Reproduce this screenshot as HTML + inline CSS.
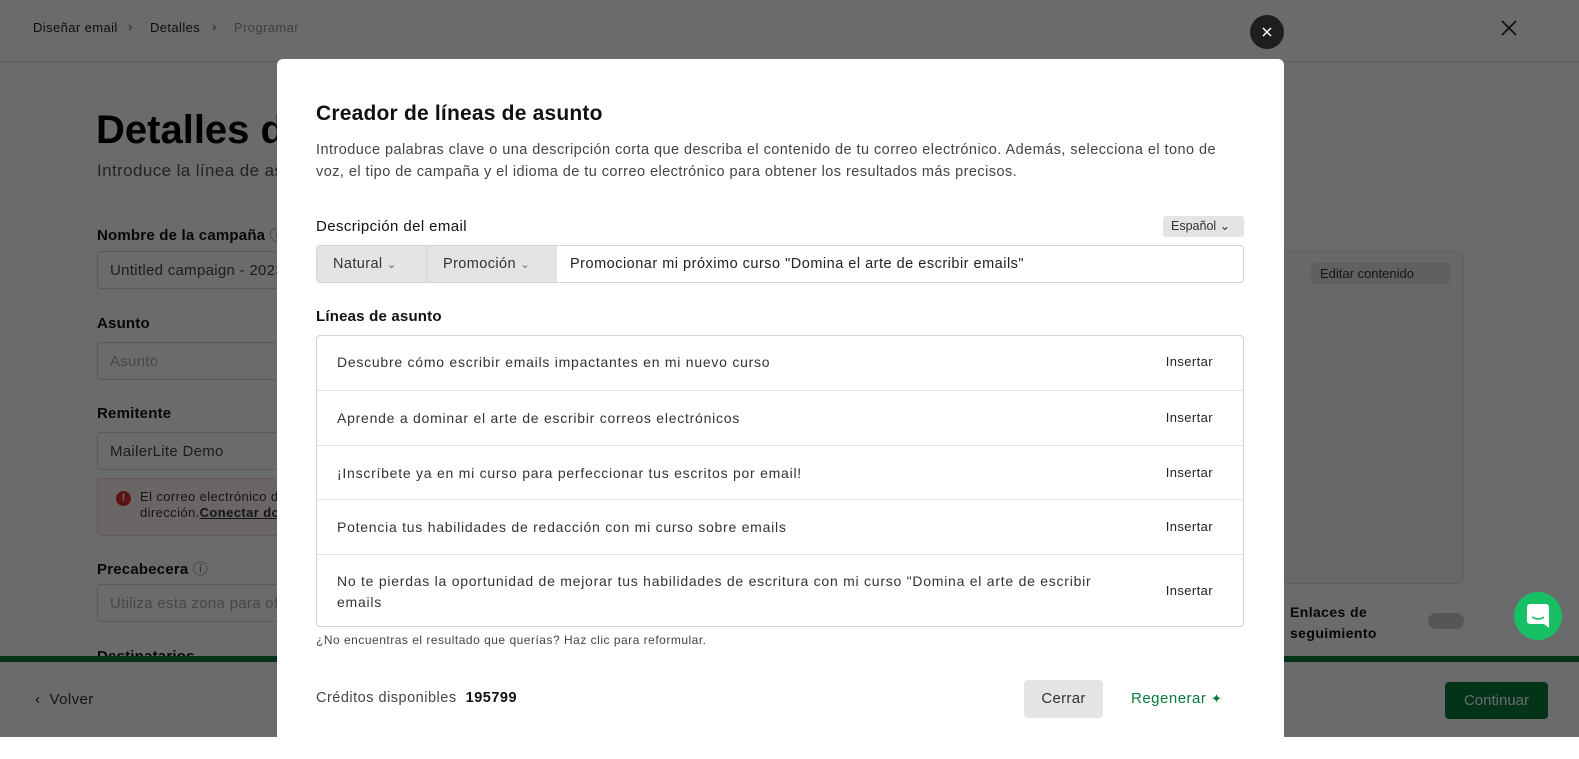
<!DOCTYPE html>
<html><head><meta charset="utf-8"><style>
*{box-sizing:border-box;margin:0;padding:0}
body{width:1579px;height:737px;overflow:hidden;position:relative;font-family:"Liberation Sans",sans-serif;background:#fff;color:#111}
.a{position:absolute}
.t{letter-spacing:.4px}
.inp{position:absolute;border:1px solid #d4d4d8;border-radius:4px;background:#fff;font-size:14px;color:#444;padding-left:12px;display:flex;align-items:center;letter-spacing:.3px}
.lbl{position:absolute;font-size:14px;font-weight:bold;color:#111;letter-spacing:.2px}
#ov{position:absolute;left:0;top:0;width:1579px;height:737px;background:rgba(0,0,0,.58)}
#m{position:absolute;left:277px;top:59px;width:1007px;height:700px;background:#fff;border-radius:6px 6px 0 0}
.row{position:absolute;left:0;width:926px;border-top:1px solid #e4e4e7;font-size:14px;color:#333;letter-spacing:.75px}
.row span{position:absolute;left:20px}
.row b{position:absolute;right:30px;font-weight:normal;font-size:13px;color:#222;letter-spacing:.4px}
</style></head><body>
<div class="a t" style="left:33px;top:20px;font-size:13px;color:#222">Diseñar email</div>
<div class="a" style="left:128px;top:19px;font-size:13px;color:#555">›</div>
<div class="a t" style="left:150px;top:20px;font-size:13px;color:#222">Detalles</div>
<div class="a" style="left:212px;top:19px;font-size:13px;color:#555">›</div>
<div class="a t" style="left:234px;top:20px;font-size:13px;color:#999">Programar</div>
<svg class="a" style="left:1501px;top:20px" width="16" height="16" viewBox="0 0 16 16"><path d="M1 1L15 15M15 1L1 15" stroke="#222" stroke-width="1.6"/></svg>
<div class="a" style="left:0;top:61px;width:1579px;height:1px;background:#ddd"></div>
<div class="a" style="left:96px;top:108px;font-size:40px;font-weight:bold;color:#000">Detalles de la campaña</div>
<div class="a t" style="left:97px;top:161px;font-size:17px;color:#555">Introduce la línea de asunto</div>
<div class="lbl" style="left:97px;top:224px;font-size:15px">Nombre de la campaña <span style="font-weight:normal;color:#777">ⓘ</span></div>
<div class="inp" style="left:97px;top:251px;width:500px;height:38px;font-size:15px">Untitled campaign - 2023</div>
<div class="lbl" style="left:97px;top:315px;font-size:15px">Asunto</div>
<div class="inp" style="left:97px;top:342px;width:500px;height:38px;color:#aaa;font-size:15px">Asunto</div>
<div class="lbl" style="left:97px;top:405px;font-size:15px">Remitente</div>
<div class="inp" style="left:97px;top:432px;width:500px;height:38px;font-size:15px">MailerLite Demo</div>
<div class="a" style="left:97px;top:478px;width:500px;height:58px;background:#fdf2f2;border:1px solid #f5d0d0;border-radius:4px"></div>
<div class="a" style="left:116px;top:491px;width:15px;height:15px;border-radius:50%;background:#d93030;color:#fff;font-size:11px;font-weight:bold;text-align:center;line-height:15px">!</div>
<div class="a t" style="left:140px;top:489px;font-size:13px;color:#333;line-height:16px">El correo electrónico de<br>dirección.<u style="font-weight:bold">Conectar dominio</u></div>
<div class="lbl" style="left:97px;top:558px;font-size:15px">Precabecera <span style="font-weight:normal;color:#777">ⓘ</span></div>
<div class="inp" style="left:97px;top:584px;width:500px;height:38px;color:#aaa;font-size:15px">Utiliza esta zona para ofrecer</div>
<div class="lbl" style="left:97px;top:648px;font-size:15px">Destinatarios</div>
<div class="a" style="left:0;top:656px;width:1579px;height:6px;background:#0b7a3c"></div>
<div class="a" style="left:0;top:662px;width:1579px;height:75px;background:#fff"></div>
<div class="a t" style="left:35px;top:691px;font-size:15px;color:#333">‹ &nbsp;Volver</div>
<div class="a" style="left:1445px;top:682px;width:103px;height:37px;background:#087a3a;border-radius:4px;color:#fff;font-size:15px;text-align:center;line-height:37px">Continuar</div>
<div class="a" style="left:1283px;top:251px;width:181px;height:333px;border:1px solid #e4e4e7;border-radius:6px;background:#f7f7f8"></div>
<div class="a" style="left:1311px;top:263px;width:139px;height:21px;background:#e4e4e7;border-radius:3px;font-size:13px;color:#333;padding-left:9px;line-height:21px">Editar contenido</div>
<div class="a t" style="left:1290px;top:602px;font-size:14px;font-weight:bold;line-height:21px">Enlaces de<br>seguimiento</div>
<div class="a" style="left:1428px;top:613px;width:36px;height:16px;border-radius:8px;background:#ccc"></div>
<div id="ov"></div>
<div class="a" style="left:1250px;top:15px;width:34px;height:34px;border-radius:50%;background:#1e1e1e"></div>
<svg class="a" style="left:1262px;top:27px" width="10" height="10" viewBox="0 0 10 10"><path d="M1 1L9 9M9 1L1 9" stroke="#fff" stroke-width="1.5"/></svg>
<div class="a" style="left:1514px;top:592px;width:48px;height:48px;border-radius:50%;background:#17c064"></div>
<svg class="a" style="left:1527px;top:604px" width="22" height="24" viewBox="0 0 22 24"><path d="M3 0h16a3 3 0 0 1 3 3v21l-5-4H3a3 3 0 0 1-3-3V3a3 3 0 0 1 3-3z" fill="#fff"/><path d="M5 13q6 4 12 0" stroke="#17c064" stroke-width="1.6" fill="none"/></svg>
<div id="m">
<div class="a" style="left:39px;top:43px;font-size:21px;font-weight:bold;color:#111;letter-spacing:.2px">Creador de líneas de asunto</div>
<div class="a" style="left:39px;top:80px;width:960px;font-size:14.5px;line-height:22px;color:#444;letter-spacing:.45px;white-space:nowrap">Introduce palabras clave o una descripción corta que describa el contenido de tu correo electrónico. Además, selecciona el tono de<br>voz, el tipo de campaña y el idioma de tu correo electrónico para obtener los resultados más precisos.</div>
<div class="lbl" style="left:39px;top:159px;font-weight:normal;font-size:15px;color:#111;letter-spacing:.4px">Descripción del email</div>
<div class="a" style="left:886px;top:157px;width:81px;height:21px;background:#e4e4e7;border-radius:3px;font-size:12.5px;color:#333;padding-left:8px;line-height:21px">Español ⌄</div>
<div class="a" style="left:39px;top:186px;width:928px;height:38px;border:1px solid #d4d4d8;border-radius:4px;overflow:hidden">
 <div class="a" style="left:0;top:0;width:109px;height:36px;background:#e4e4e7;font-size:14.5px;color:#333;padding-left:16px;line-height:36px;letter-spacing:.4px">Natural <span style="font-size:11px;color:#666">⌄</span></div>
 <div class="a" style="left:109px;top:0;width:131px;height:36px;background:#e4e4e7;border-left:1px solid #d4d4d8;font-size:14.5px;color:#333;padding-left:16px;line-height:36px;letter-spacing:.4px">Promoción <span style="font-size:11px;color:#666">⌄</span></div>
 <div class="a" style="left:253px;top:0;font-size:14.5px;color:#222;line-height:36px;letter-spacing:.5px">Promocionar mi próximo curso "Domina el arte de escribir emails"</div>
</div>
<div class="lbl" style="left:39px;top:249px;font-size:15px">Líneas de asunto</div>
<div class="a" style="left:39px;top:276px;width:928px;height:292px;border:1px solid #d4d4d8;border-radius:4px;overflow:hidden">
 <div class="row" style="top:-1px;height:55px;border-top:none"><span style="top:19px">Descubre cómo escribir emails impactantes en mi nuevo curso</span><b style="top:19px">Insertar</b></div>
 <div class="row" style="top:54px;height:55px"><span style="top:19px">Aprende a dominar el arte de escribir correos electrónicos</span><b style="top:19px">Insertar</b></div>
 <div class="row" style="top:109px;height:55px"><span style="top:19px">¡Inscríbete ya en mi curso para perfeccionar tus escritos por email!</span><b style="top:19px">Insertar</b></div>
 <div class="row" style="top:163px;height:55px"><span style="top:19px">Potencia tus habilidades de redacción con mi curso sobre emails</span><b style="top:19px">Insertar</b></div>
 <div class="row" style="top:218px;height:75px"><span style="top:16px;line-height:21px;white-space:nowrap">No te pierdas la oportunidad de mejorar tus habilidades de escritura con mi curso "Domina el arte de escribir<br>emails</span><b style="top:28px">Insertar</b></div>
</div>
<div class="a" style="left:39px;top:574px;font-size:12px;color:#444;letter-spacing:.5px">¿No encuentras el resultado que querías? Haz clic para reformular.</div>
<div class="a" style="left:39px;top:631px;font-size:14.5px;color:#444;letter-spacing:.5px">Créditos disponibles &nbsp;<b style="color:#111">195799</b></div>
<div class="a" style="left:747px;top:621px;width:79px;height:38px;background:#e4e4e7;border-radius:4px;font-size:15px;color:#333;text-align:center;line-height:38px;letter-spacing:.3px">Cerrar</div>
<div class="a" style="left:854px;top:631px;font-size:15px;color:#0a7a3a;letter-spacing:.5px">Regenerar <span style="font-size:13px">✦</span></div>
</div>
</body></html>
